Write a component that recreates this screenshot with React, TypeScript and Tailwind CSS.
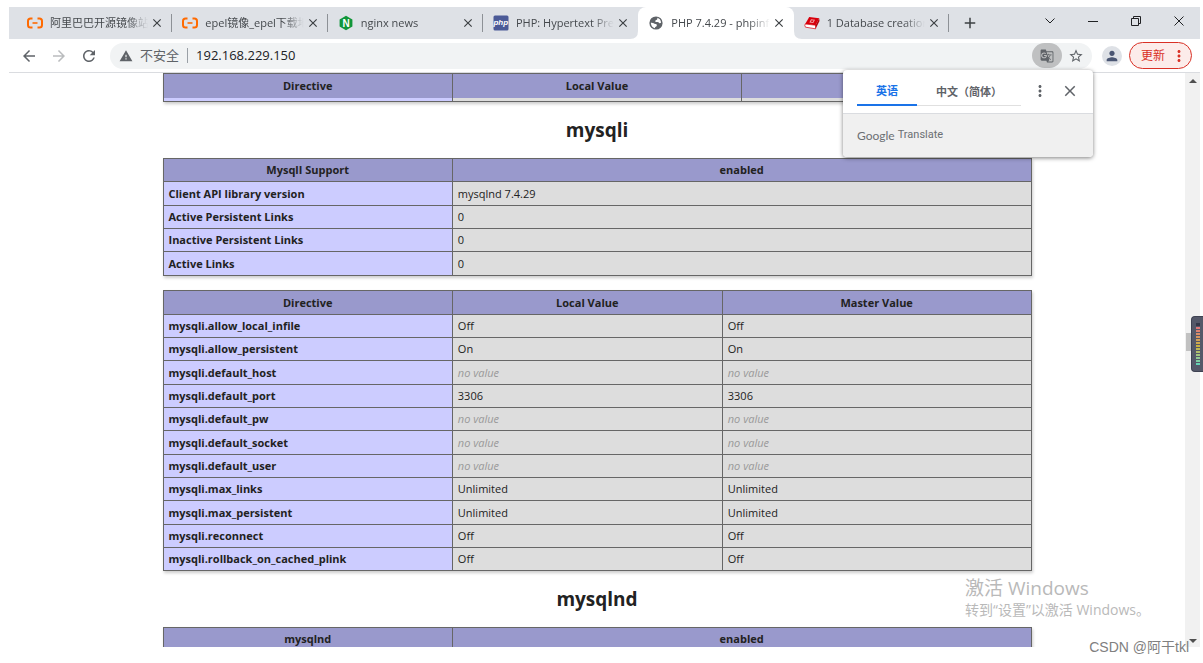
import React from 'react';
import {
  MdArrowBack,
  MdArrowForward,
  MdRefresh,
  MdWarning,
  MdGTranslate,
  MdStarBorder,
  MdPerson,
  MdMoreVert,
  MdClose,
  MdAdd,
} from 'react-icons/md';

const AliIcon = () => (
  <svg viewBox="0 0 16 16" className="h-4 w-4" fill="none" stroke="#ff6a00" strokeWidth="2">
    <path d="M5.5 3.500H3.600Q1 3.500 1 6v4q0 2.500 2.600 2.500H5.500" />
    <path d="M10.500 3.500h1.900Q15 3.500 15 6v4q0 2.500-2.600 2.500h-1.900" />
    <path d="M5.500 8h5" strokeWidth="1.600" />
  </svg>
);

const NginxIcon = () => (
  <svg viewBox="0 0 16 16" className="h-4 w-4">
    <path d="M8 .8 14.400 4.400v7.200L8 15.200 1.600 11.600V4.400z" fill="#119639" />
    <text x="8" y="11.500" textAnchor="middle" fontSize="10" fontWeight="700" fill="#fff" fontFamily="Liberation Sans, sans-serif">N</text>
  </svg>
);

const PhpIcon = () => (
  <svg viewBox="0 0 16 16" className="h-4 w-4">
    <rect x="0.500" y="0.500" width="15" height="15" rx="1.500" fill="#4b5a97" />
    <text x="7.800" y="10" textAnchor="middle" fontSize="8" fontWeight="700" fontStyle="italic" fill="#fff" fontFamily="Liberation Sans, sans-serif">php</text>
  </svg>
);

const GlobeIcon = () => (
  <svg viewBox="0 0 16 16" className="h-4 w-4">
    <circle cx="8" cy="8" r="6.600" fill="#5f6368" />
    <path d="M9.300 2.800Q12.500 3.700 13.100 7.400q-.8 1.200-2 .6-.5-1.300-2.300-1-1.900.2-1.600-1.100.3-1 1.600-1.200.9-.6.500-1.900z" fill="#fff" />
    <path d="M2.800 7.700q1.700-.3 2.900.6.600.9 2.100.8 1.400.3 1 1.700-.3 1-1.500 1.200-.4.500-.3 1.300Q3.200 12.200 2.800 7.700z" fill="#fff" />
  </svg>
);

const BookIcon = () => (
  <svg viewBox="0 0 16 16" className="h-4 w-4">
    <path d="M5.200 2 15.200 3.200 11.600 10.200 1.200 9z" fill="#d8000c" />
    <path d="M1.200 9 11.600 10.200V13.800L1.500 12.200Q.3 10.600 1.200 9z" fill="#fff" stroke="#d8000c" strokeWidth=".7" />
    <path d="M11.600 10.200 15.200 3.200 15.500 6 11.600 13.800z" fill="#b30009" />
    <path d="M7 4.200 11 4.700 9.300 8 5.400 7.500z" fill="#f3a3a6" />
    <path d="M7.600 5.300 9.600 5.500 8.800 6.900 6.900 6.700z" fill="#d8000c" />
  </svg>
);

const tabs = [
  { title: '阿里巴巴开源镜像站', icon: <AliIcon />, active: false, divider: true },
  { title: 'epel镜像_epel下载地址', icon: <AliIcon />, active: false, divider: true },
  { title: 'nginx news', icon: <NginxIcon />, active: false, divider: true },
  { title: 'PHP: Hypertext Preprocessor', icon: <PhpIcon />, active: false, divider: false },
  { title: 'PHP 7.4.29 - phpinfo()', icon: <GlobeIcon />, active: true, divider: false },
  { title: '1 Database creation', icon: <BookIcon />, active: false, divider: true },
];

const support = [
  ['Client API library version', 'mysqlnd 7.4.29'],
  ['Active Persistent Links', '0'],
  ['Inactive Persistent Links', '0'],
  ['Active Links', '0'],
];

const directives = [
  ['mysqli.allow_local_infile', 'Off'],
  ['mysqli.allow_persistent', 'On'],
  ['mysqli.default_host', 'no value'],
  ['mysqli.default_port', '3306'],
  ['mysqli.default_pw', 'no value'],
  ['mysqli.default_socket', 'no value'],
  ['mysqli.default_user', 'no value'],
  ['mysqli.max_links', 'Unlimited'],
  ['mysqli.max_persistent', 'Unlimited'],
  ['mysqli.reconnect', 'Off'],
  ['mysqli.rollback_on_cached_plink', 'Off'],
];

const tableStyle = 'w-full max-w-[869px] mx-auto table-fixed border-collapse border border-[#666] text-[11px] leading-4 shadow-[1px_2px_3px_#ccc]';
const thStyle = 'border border-[#666] bg-[#9999cc] p-0 text-center font-bold';
const nameStyle = 'border border-[#666] bg-[#ccccff] py-0 px-[5px] text-left font-bold';
const valueStyle = 'border border-[#666] bg-[#dddddd] py-0 px-[5px]';

const Value = ({ text }: { text: string }) => (
  <td className={valueStyle}>
    {text === 'no value' ? <i className="text-[#999]">{text}</i> : text}
  </td>
);

const TabStrip = () => (
  <div className="flex h-8 shrink-0 bg-[#dee1e6] pl-2">
    <div className="flex w-[932px] shrink" role="tablist">
      {tabs.map((tab) => (
        <div
          key={tab.title}
          className={`relative flex min-w-0 flex-1 items-center pl-2.5 pr-2 ${tab.active ? 'rounded-t-lg bg-white' : ''}`}
        >
          {tab.active && (
            <>
              <svg viewBox="0 0 8 8" className="absolute -left-2 bottom-0 h-2 w-2"><path d="M8 0v8H0Q8 8 8 0z" fill="#fff" /></svg>
              <svg viewBox="0 0 8 8" className="absolute -right-2 bottom-0 h-2 w-2"><path d="M0 0v8h8Q0 8 0 0z" fill="#fff" /></svg>
            </>
          )}
          <span className="shrink-0">{tab.icon}</span>
          <button
            role="tab"
            aria-selected={tab.active}
            className="ml-[7px] min-w-0 flex-1 overflow-hidden whitespace-nowrap text-left text-[11px] text-[#45494d] [mask-image:linear-gradient(to_right,#000_78%,transparent)]"
          >
            {tab.title}
          </button>
          <button aria-label="关闭" className="ml-0.5 shrink-0 text-[#3c4043]"><MdClose className="h-3.5 w-3.5" /></button>
          {tab.divider && <span className="absolute right-0 top-[7px] h-[18px] w-px bg-[#8d9196]" />}
        </div>
      ))}
    </div>
    <button aria-label="新标签页" className="ml-3 text-[#3c4043]"><MdAdd className="h-[18px] w-[18px]" /></button>
    <div className="ml-auto flex h-[27px] text-[#202124]">
      <button aria-label="搜索标签页" className="flex w-[43px] items-center justify-center">
        <svg viewBox="0 0 12 12" className="h-3 w-3" fill="none" stroke="currentColor"><path d="M1.500 3.500 6 8l4.500-4.500" /></svg>
      </button>
      <button aria-label="最小化" className="flex w-[43px] items-center justify-center">
        <svg viewBox="0 0 12 12" className="h-3 w-3" fill="none" stroke="currentColor"><path d="M1 6.500h10" /></svg>
      </button>
      <button aria-label="还原" className="flex w-[43px] items-center justify-center">
        <svg viewBox="0 0 12 12" className="h-3 w-3" fill="none" stroke="currentColor"><path d="M1.500 3.500h7v7h-7zM3.500 3.500v-2h7v7h-2" /></svg>
      </button>
      <button aria-label="关闭窗口" className="flex w-[43px] items-center justify-center">
        <svg viewBox="0 0 12 12" className="h-3 w-3" fill="none" stroke="currentColor"><path d="m1.500 1.500 9 9m0-9-9 9" /></svg>
      </button>
    </div>
  </div>
);

const Toolbar = () => (
  <div className="flex h-[34px] shrink-0 items-center border-b border-[#dadce0] bg-white pl-[11px] pr-2">
    <div className="flex items-center gap-3 text-[#5f6368]">
      <button aria-label="后退"><MdArrowBack className="h-[18px] w-[18px]" /></button>
      <button aria-label="前进" className="text-[#babcbe]"><MdArrowForward className="h-[18px] w-[18px]" /></button>
      <button aria-label="刷新"><MdRefresh className="h-[18px] w-[18px]" /></button>
    </div>
    <div className="ml-3 flex h-[26px] flex-1 items-center rounded-full bg-[#f1f3f4] pl-[9px] text-[13px]">
      <MdWarning className="h-3.5 w-3.5 text-[#5f6368]" />
      <label htmlFor="url" className="ml-[7px] text-[#5f6368]">不安全</label>
      <span className="mx-2 h-[15px] w-px bg-[#9aa0a6]" />
      <input id="url" defaultValue="192.168.229.150" className="min-w-0 flex-1 bg-transparent text-[#202124] outline-none" />
      <button aria-label="翻译此页" className="flex h-[25px] w-[30px] items-center justify-center rounded-full bg-[#bfc0c1] text-[#5f6368]">
        <MdGTranslate className="h-3.5 w-3.5" />
      </button>
      <button aria-label="收藏" className="ml-1.5 mr-2 text-[#5f6368]"><MdStarBorder className="h-4 w-4" /></button>
    </div>
    <button aria-label="用户" className="ml-2.5 flex h-5 w-5 items-center justify-center rounded-full bg-[#dee1e6] text-[#4a5673]">
      <MdPerson className="h-4 w-4" />
    </button>
    <button className="ml-[7px] flex h-[27px] w-[63px] items-center justify-between rounded-full border border-[#d93025] bg-[#fcecea] pl-[11px] pr-[3px] text-xs text-[#d93025]">
      更新
      <MdMoreVert className="h-[18px] w-[18px]" />
    </button>
  </div>
);

const TranslatePopup = () => (
  <div className="absolute right-[107px] top-[63px] w-[250px] overflow-hidden rounded bg-white shadow-[0_1px_4px_rgba(0,0,0,0.5)]">
    <div className="flex h-11 items-start border-b border-[#dadce0] pl-3.5 pt-2">
      <div className="flex h-7 border-b border-[#e0e0e0] text-[11px] font-bold" role="tablist">
        <button role="tab" aria-selected="true" className="h-7 w-[60px] border-b-2 border-[#1a73e8] text-[#1a73e8]">英语</button>
        <button role="tab" aria-selected="false" className="h-7 w-[104px] whitespace-nowrap text-[#5f6368]">中文（简体）</button>
      </div>
      <button aria-label="选项" className="ml-2.5 mt-1 text-[#5f6368]"><MdMoreVert className="h-[18px] w-[18px]" /></button>
      <button aria-label="关闭翻译" className="ml-3 mt-1 text-[#5f6368]"><MdClose className="h-[18px] w-[18px]" /></button>
    </div>
    <div className="flex h-[43px] items-center bg-[#f0f0f0] pl-3.5 text-[#6b6f73]">
      <span className="font-['Lato'] text-xs">Google</span>
      <span className="ml-[3px] font-['Roboto','Noto_Sans_CJK_SC',sans-serif] text-[11px]">Translate</span>
    </div>
  </div>
);

const Heading = ({ children }: { children: React.ReactNode }) => (
  <h2 className="flex h-[56px] items-center justify-center text-[19px] font-bold">{children}</h2>
);

const PhpInfo = () => (
  <main className="min-w-0 flex-1 overflow-hidden bg-white text-[#222]">
    <table className={tableStyle}>
      <tbody>
        <tr className="h-6">
          <th className="border-x border-t border-[#666] bg-[#9999cc] p-0 text-center font-bold">Directive</th>
          <th className="border-x border-t border-[#666] bg-[#9999cc] p-0 text-center font-bold">Local Value</th>
          <th className="border-x border-t border-[#666] bg-[#9999cc] p-0" />
        </tr>
        <tr className="h-1">
          <td className="border-x border-b border-[#666] bg-[#ccccff] p-0" />
          <td className="border-x border-b border-[#666] bg-[#dddddd] p-0" />
          <td className="border-x border-b border-[#666] bg-[#dddddd] p-0" />
        </tr>
      </tbody>
    </table>

    <Heading>mysqli</Heading>
    <table className={tableStyle}>
      <colgroup>
        <col className="w-1/3" />
        <col />
      </colgroup>
      <tbody>
        <tr className="h-[23px]">
          <th className={thStyle}>MysqlI Support</th>
          <th className={thStyle}>enabled</th>
        </tr>
        {support.map(([name, value]) => (
          <tr key={name} className="h-[23px] nth-[3n+2]:h-6">
            <td className={nameStyle}>{name}</td>
            <Value text={value} />
          </tr>
        ))}
      </tbody>
    </table>

    <table className={`${tableStyle} mt-3.5`}>
      <colgroup>
        <col className="w-1/3" />
        <col className="w-[31.1%]" />
        <col />
      </colgroup>
      <tbody>
        <tr className="h-6">
          <th className={thStyle}>Directive</th>
          <th className={thStyle}>Local Value</th>
          <th className={thStyle}>Master Value</th>
        </tr>
        {directives.map(([name, value]) => (
          <tr key={name} className="h-[23px] nth-[3n+1]:h-6">
            <td className={nameStyle}>{name}</td>
            <Value text={value} />
            <Value text={value} />
          </tr>
        ))}
      </tbody>
    </table>

    <Heading>mysqlnd</Heading>
    <table className={tableStyle}>
      <colgroup>
        <col className="w-1/3" />
        <col />
      </colgroup>
      <tbody>
        <tr className="h-[23px]">
          <th className={thStyle}>mysqlnd</th>
          <th className={thStyle}>enabled</th>
        </tr>
      </tbody>
    </table>
  </main>
);

const App: React.FC = () => {
  return (
    <div className="relative flex h-screen flex-col overflow-hidden bg-white pb-4 pl-[9px] pr-[3px] pt-[7px] font-['Open_Sans','Noto_Sans_CJK_SC',sans-serif]">
      <div className="relative flex min-h-0 flex-1 flex-col">
        <TabStrip />
        <Toolbar />
        <div className="flex min-h-0 flex-1">
          <PhpInfo />
          <div className="relative flex w-[15px] shrink-0 flex-col items-center justify-between bg-[#f1f1f1] pb-1 pt-1.5">
            <svg viewBox="0 0 8 4" className="h-1 w-2"><path d="M0 4 4 0l4 4z" fill="#505050" /></svg>
            <svg viewBox="0 0 8 4" className="h-1 w-2"><path d="M0 0h8L4 4z" fill="#505050" /></svg>
            <span className="absolute left-px top-[260px] h-[18px] w-[13px] bg-[#c1c1c1]" />
          </div>
        </div>
        <TranslatePopup />
      </div>

      {/* level meter docked to the screen edge */}
      <div className="absolute right-0 top-[316px] flex h-[56px] w-3 flex-col items-center rounded-l border border-r-0 border-[#3e4252] bg-[#545869] pt-1.5">
        <span className="h-[3px] w-1 bg-[#34384a]" />
        <span className="mt-px h-[39px] w-1 bg-linear-to-b from-[#e0737a] via-[#c9b23c] to-[#4fd6c0] [mask-image:repeating-linear-gradient(to_bottom,#000_0_2px,transparent_2px_3px)]" />
      </div>

      <div className="pointer-events-none absolute right-[53px] top-[576px] text-[#b9b9b9]">
        <p className="text-[19px] leading-6">激活 Windows</p>
        <p className="text-sm leading-5">转到“设置”以激活 Windows。</p>
      </div>
      <div className="pointer-events-none absolute bottom-1.5 right-3.5 font-['Liberation_Sans','Noto_Sans_CJK_SC',sans-serif] text-sm leading-5 text-[#808080]">
        CSDN @阿干tkl
      </div>
    </div>
  );
};

export default App;
